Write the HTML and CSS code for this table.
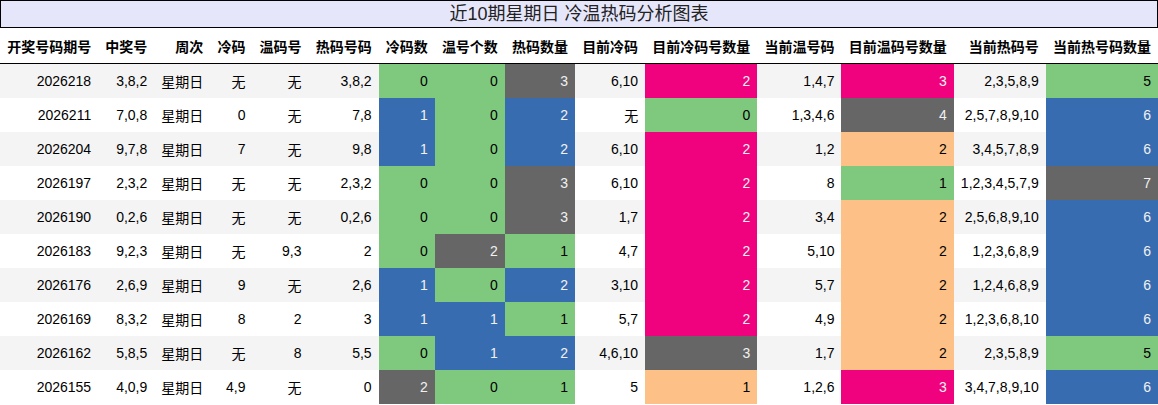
FILE: index.html
```html
<!DOCTYPE html>
<html lang="zh">
<head>
<meta charset="utf-8">
<title>近10期星期日 冷温热码分析图表</title>
<link rel="stylesheet" href="styles.css">
</head>
<body>
<div class="title">近10期星期日 冷温热码分析图表</div>
<table class="grid">
<thead>
<tr><th>开奖号码期号</th><th>中奖号</th><th>周次</th><th>冷码</th><th>温码号</th><th>热码号码</th><th>冷码数</th><th>温号个数</th><th>热码数量</th><th>目前冷码</th><th>目前冷码号数量</th><th>当前温号码</th><th>目前温码号数量</th><th>当前热码号</th><th>当前热号码数量</th></tr>
</thead>
<tbody>
<tr><td>2026218</td><td>3,8,2</td><td>星期日</td><td>无</td><td>无</td><td>3,8,2</td><td class="g">0</td><td class="g">0</td><td class="k">3</td><td>6,10</td><td class="m">2</td><td>1,4,7</td><td class="m">3</td><td>2,3,5,8,9</td><td class="g">5</td></tr>
<tr><td>2026211</td><td>7,0,8</td><td>星期日</td><td>0</td><td>无</td><td>7,8</td><td class="b">1</td><td class="g">0</td><td class="b">2</td><td>无</td><td class="g">0</td><td>1,3,4,6</td><td class="k">4</td><td>2,5,7,8,9,10</td><td class="b">6</td></tr>
<tr><td>2026204</td><td>9,7,8</td><td>星期日</td><td>7</td><td>无</td><td>9,8</td><td class="b">1</td><td class="g">0</td><td class="b">2</td><td>6,10</td><td class="m">2</td><td>1,2</td><td class="o">2</td><td>3,4,5,7,8,9</td><td class="b">6</td></tr>
<tr><td>2026197</td><td>2,3,2</td><td>星期日</td><td>无</td><td>无</td><td>2,3,2</td><td class="g">0</td><td class="g">0</td><td class="k">3</td><td>6,10</td><td class="m">2</td><td>8</td><td class="g">1</td><td>1,2,3,4,5,7,9</td><td class="k">7</td></tr>
<tr><td>2026190</td><td>0,2,6</td><td>星期日</td><td>无</td><td>无</td><td>0,2,6</td><td class="g">0</td><td class="g">0</td><td class="k">3</td><td>1,7</td><td class="m">2</td><td>3,4</td><td class="o">2</td><td>2,5,6,8,9,10</td><td class="b">6</td></tr>
<tr><td>2026183</td><td>9,2,3</td><td>星期日</td><td>无</td><td>9,3</td><td>2</td><td class="g">0</td><td class="k">2</td><td class="g">1</td><td>4,7</td><td class="m">2</td><td>5,10</td><td class="o">2</td><td>1,2,3,6,8,9</td><td class="b">6</td></tr>
<tr><td>2026176</td><td>2,6,9</td><td>星期日</td><td>9</td><td>无</td><td>2,6</td><td class="b">1</td><td class="g">0</td><td class="b">2</td><td>3,10</td><td class="m">2</td><td>5,7</td><td class="o">2</td><td>1,2,4,6,8,9</td><td class="b">6</td></tr>
<tr><td>2026169</td><td>8,3,2</td><td>星期日</td><td>8</td><td>2</td><td>3</td><td class="b">1</td><td class="b">1</td><td class="g">1</td><td>5,7</td><td class="m">2</td><td>4,9</td><td class="o">2</td><td>1,2,3,6,8,10</td><td class="b">6</td></tr>
<tr><td>2026162</td><td>5,8,5</td><td>星期日</td><td>无</td><td>8</td><td>5,5</td><td class="g">0</td><td class="b">1</td><td class="b">2</td><td>4,6,10</td><td class="k">3</td><td>1,7</td><td class="o">2</td><td>2,3,5,8,9</td><td class="g">5</td></tr>
<tr><td>2026155</td><td>4,0,9</td><td>星期日</td><td>4,9</td><td>无</td><td>0</td><td class="k">2</td><td class="g">0</td><td class="g">1</td><td>5</td><td class="o">1</td><td>1,2,6</td><td class="m">3</td><td>3,4,7,8,9,10</td><td class="b">6</td></tr>
</tbody>
</table>
</body>
</html>
```

FILE: styles.css
```css
html, body {
  margin: 0;
  padding: 0;
  background: #fff;
}
body {
  font-family: "Liberation Sans", "Noto Sans CJK SC", sans-serif;
  color: #000;
  width: 1158px;
}
.title {
  height: 26px;
  line-height: 26px;
  border: 1px solid #000;
  background: #e6e6fa;
  text-align: center;
  font-size: 18px;
  color: #222;
}
.grid {
  width: 100%;
  border-collapse: collapse;
  border-spacing: 0;
  font-size: 14px;
}
.grid th,
.grid td {
  padding: 0 7px;
  text-align: right;
  white-space: nowrap;
  vertical-align: middle;
}
.grid th {
  height: 35px;
  font-weight: bold;
  border-bottom: 1px solid #000;
}
.grid td {
  height: 34px;
}
.grid tbody tr:nth-child(odd) {
  background: #f4f4f4;
}
.grid tbody tr:nth-child(even) {
  background: #fff;
}
.grid td.g { background: #7fc97f; color: #000; }
.grid td.o { background: #fdc086; color: #000; }
.grid td.b { background: #386cb0; color: #f1f1f1; }
.grid td.m { background: #f0027f; color: #f1f1f1; }
.grid td.k { background: #666666; color: #f1f1f1; }
```
